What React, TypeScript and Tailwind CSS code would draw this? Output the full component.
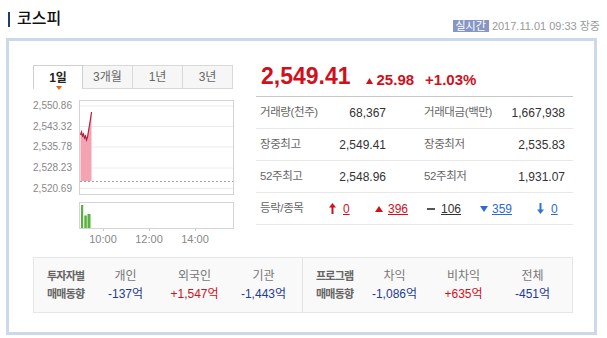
import React from "react";

const F = "font-['Liberation_Sans','Noto_Sans_CJK_KR',sans-serif]";

function UpArrow({ color }: { color: string }) {
  return (
    <svg width="7" height="11" viewBox="0 0 7 11">
      <polygon points="3.5,0 7,4.5 0,4.5" fill={color} />
      <rect x="2.5" y="4" width="2" height="7" fill={color} />
    </svg>
  );
}
function DownArrow({ color }: { color: string }) {
  return (
    <svg width="7" height="11" viewBox="0 0 7 11">
      <rect x="2.5" y="0" width="2" height="7" fill={color} />
      <polygon points="0,6.5 7,6.5 3.5,11" fill={color} />
    </svg>
  );
}
function Tri({ up, color }: { up: boolean; color: string }) {
  return (
    <svg width="8" height="6" viewBox="0 0 8 6">
      {up ? (
        <polygon points="4,0 8,6 0,6" fill={color} />
      ) : (
        <polygon points="0,0 8,0 4,6" fill={color} />
      )}
    </svg>
  );
}

const line: [number, number][] = [
  [0, 34], [1, 31], [2, 35], [3, 33], [4, 37], [5, 35], [6, 39], [7, 36], [8, 30], [9, 24], [10, 18], [11, 11],
];

function Chart() {
  const pts = line.map(([x, y]) => `${x + 0.5},${y}`).join(" ");
  const fill = `0.5,80 ${pts} 11.5,80`;
  const grid = [5, 25.5, 46, 67, 87.5];
  const labels = ["2,550.86", "2,543.32", "2,535.78", "2,528.23", "2,520.69"];
  return (
    <div className="flex flex-col">
      <div className="flex mt-[11px]">
        <div className="w-[46px] flex flex-col items-end pr-[7px] mt-[-4.5px]">
          {labels.map((l) => (
            <div key={l} className="h-[20.75px] flex items-center text-[10px] text-[#888] leading-none">
              {l}
            </div>
          ))}
        </div>
        <div className="w-[155px] h-[95px] border border-[#d4d4d4]">
          <svg width="153" height="93" viewBox="0 0 153 93" className="block">
            {grid.map((g) => (
              <line key={g} x1="0" x2="153" y1={g} y2={g} stroke="#ececec" strokeWidth="1" />
            ))}
            <polygon points={fill} fill="#f4a3b2" />
            <polyline points={pts} fill="none" stroke="#b32040" strokeWidth="1.2" />
            <line x1="0" x2="153" y1="80.5" y2="80.5" stroke="#a0a0a0" strokeWidth="1" strokeDasharray="2,2" />
          </svg>
        </div>
      </div>
      <div className="flex mt-[3px]">
        <div className="w-[46px]" />
        <div className="w-[155px] h-[27px] border border-[#d4d4d4]">
          <svg width="153" height="25" viewBox="0 0 153 25" className="block">
            <rect x="1" y="2" width="2.2" height="23" fill="#58b23d" />
            <rect x="4.3" y="12.5" width="2.5" height="12.5" fill="#58b23d" />
            <rect x="7.5" y="11" width="3" height="14" fill="#58b23d" />
          </svg>
        </div>
      </div>
      <div className="flex h-[16px]">
        <div className="w-[46px]" />
        <div className="flex ml-[1px]">
          {["10:00", "12:00", "14:00"].map((t) => (
            <div key={t} className="w-[46px] flex flex-col items-center">
              <div className="w-px h-[3px] bg-[#c8c8c8]" />
              <div className="text-[11px] text-[#888] leading-none mt-[3px]">{t}</div>
            </div>
          ))}
        </div>
      </div>
    </div>
  );
}

function Tabs() {
  const tabs = ["1일", "3개월", "1년", "3년"];
  return (
    <div className="flex h-[24px]">
      {tabs.map((t, i) => (
        <div
          key={t}
          className={
            i === 0
              ? "relative w-[50px] h-[24px] border border-[#d0d0d0] border-b-0 bg-white flex items-center justify-center text-[12px] font-bold text-[#222]"
              : "w-[50px] h-[24px] border-y border-r border-[#d9d9d9] bg-[#f6f6f6] flex items-center justify-center text-[12px] text-[#666]"
          }
        >
          {t}
          {i === 0 && (
            <div className="absolute left-[22px] bottom-[-1px] w-0 h-0 border-l-[3px] border-r-[3px] border-t-[4px] border-l-transparent border-r-transparent border-t-[#e4661c]" />
          )}
        </div>
      ))}
    </div>
  );
}

function Row({ a, av, b, bv }: { a: string; av: string; b: string; bv: string }) {
  return (
    <div className="h-[32px] border-b border-[#e8e8e8] flex items-center pl-[4px] pr-[8px] text-[12px]">
      <div className="w-[126px] flex justify-between items-center">
        <span className="text-[#666] text-[11.5px] tracking-[-0.4px]">{a}</span>
        <span className="text-[#333]">{av}</span>
      </div>
      <div className="flex-1 ml-[38px] flex justify-between items-center">
        <span className="text-[#666] text-[11.5px] tracking-[-0.4px]">{b}</span>
        <span className="text-[#333]">{bv}</span>
      </div>
    </div>
  );
}

function Right() {
  return (
    <div className="w-[317px] flex flex-col">
      <div className="h-[32px] border-b border-[#c8c8c8] flex items-start pl-[5px]">
        <span className="text-[23px] font-bold text-[#d0101b] leading-none">2,549.41</span>
        <span className="flex items-baseline ml-[15px] mt-[7px]">
          <span className="mr-[4px] self-end pb-[3px]">
            <svg width="7" height="6" viewBox="0 0 7 6">
              <polygon points="3.5,0 7,6 0,6" fill="#d0101b" />
            </svg>
          </span>
          <span className="text-[15px] font-bold text-[#d0101b] leading-none">25.98</span>
          <span className="text-[15px] font-bold text-[#d0101b] leading-none ml-[11px]">+1.03%</span>
        </span>
      </div>
      <Row a="거래량(천주)" av="68,367" b="거래대금(백만)" bv="1,667,938" />
      <Row a="장중최고" av="2,549.41" b="장중최저" bv="2,535.83" />
      <Row a="52주최고" av="2,548.96" b="52주최저" bv="1,931.07" />
      <div className="h-[32px] border-b border-[#e8e8e8] flex items-center pl-[4px] text-[12px]">
        <span className="w-[69px] text-[#666] text-[11.5px] tracking-[-0.4px]">등락/종목</span>
        <span className="w-[46px] flex items-center">
          <UpArrow color="#d0101b" />
          <span className="ml-[7px] underline text-[#d0101b]">0</span>
        </span>
        <span className="w-[52px] flex items-center">
          <Tri up color="#d0101b" />
          <span className="ml-[5px] underline text-[#d0101b]">396</span>
        </span>
        <span className="w-[53px] flex items-center">
          <span className="w-[8px] h-[2px] bg-[#555]" />
          <span className="ml-[6px] underline text-[#333]">106</span>
        </span>
        <span className="w-[57px] flex items-center">
          <Tri up={false} color="#2d6bd2" />
          <span className="ml-[4px] underline text-[#2d6bd2]">359</span>
        </span>
        <span className="flex items-center">
          <DownArrow color="#3173d6" />
          <span className="ml-[7px] underline text-[#2d6bd2]">0</span>
        </span>
      </div>
    </div>
  );
}

function Half({ t1, t2, cols }: { t1: string; t2: string; cols: { l: string; v: string; pos: boolean }[] }) {
  return (
    <div className="flex items-center pl-[13px] text-[12px] leading-[18px]">
      <div className="w-[44px] font-bold text-[#666] flex flex-col whitespace-nowrap text-[11px] tracking-[-0.8px]">
        <span>{t1}</span>
        <span>{t2}</span>
      </div>
      {cols.map((c) => (
        <div key={c.l} className="w-[69px] flex flex-col items-center whitespace-nowrap">
          <span className="text-[#777]">{c.l}</span>
          <span className={c.pos ? "text-[#d0101b]" : "text-[#1f3c93]"}>{c.v}</span>
        </div>
      ))}
    </div>
  );
}

export default function App() {
  return (
    <div className={`w-[607px] h-[338px] bg-white overflow-hidden ${F}`}>
      <div className="h-[38px] flex justify-between">
        <div className="flex items-center mt-[11px] ml-[8px] h-[16px]">
          <div className="w-[2px] h-[15px] bg-[#1d3f72]" />
          <span className="ml-[7px] text-[16px] text-[#111] font-medium leading-none">코스피</span>
        </div>
        <div className="flex items-center mt-[20px] mr-[7px] h-[12px]">
          <span className="bg-[#8797c4] text-white text-[11px] leading-none px-[3px] h-[12px] flex items-center">실시간</span>
          <span className="ml-[3px] text-[11px] text-[#999] leading-none">2017.11.01 09:33 장중</span>
        </div>
      </div>
      <div className="ml-[6px] w-[591px] h-[297px] border-[3px] border-[#cbd9eb] pt-[24px] pl-[24px]">
        <div className="flex">
          <div className="w-[201px] flex flex-col">
            <Tabs />
            <Chart />
          </div>
          <div className="ml-[22px]">
            <Right />
          </div>
        </div>
        <div className="mt-[12px] w-[540px] h-[56px] bg-[#f9f9f9] border border-[#e6e6e6] flex">
          <div className="w-[269px] border-r border-[#e3e3e3] flex items-center">
            <Half
              t1="투자자별"
              t2="매매동향"
              cols={[
                { l: "개인", v: "-137억", pos: false },
                { l: "외국인", v: "+1,547억", pos: true },
                { l: "기관", v: "-1,443억", pos: false },
              ]}
            />
          </div>
          <div className="flex-1 flex items-center">
            <Half
              t1="프로그램"
              t2="매매동향"
              cols={[
                { l: "차익", v: "-1,086억", pos: false },
                { l: "비차익", v: "+635억", pos: true },
                { l: "전체", v: "-451억", pos: false },
              ]}
            />
          </div>
        </div>
      </div>
    </div>
  );
}
